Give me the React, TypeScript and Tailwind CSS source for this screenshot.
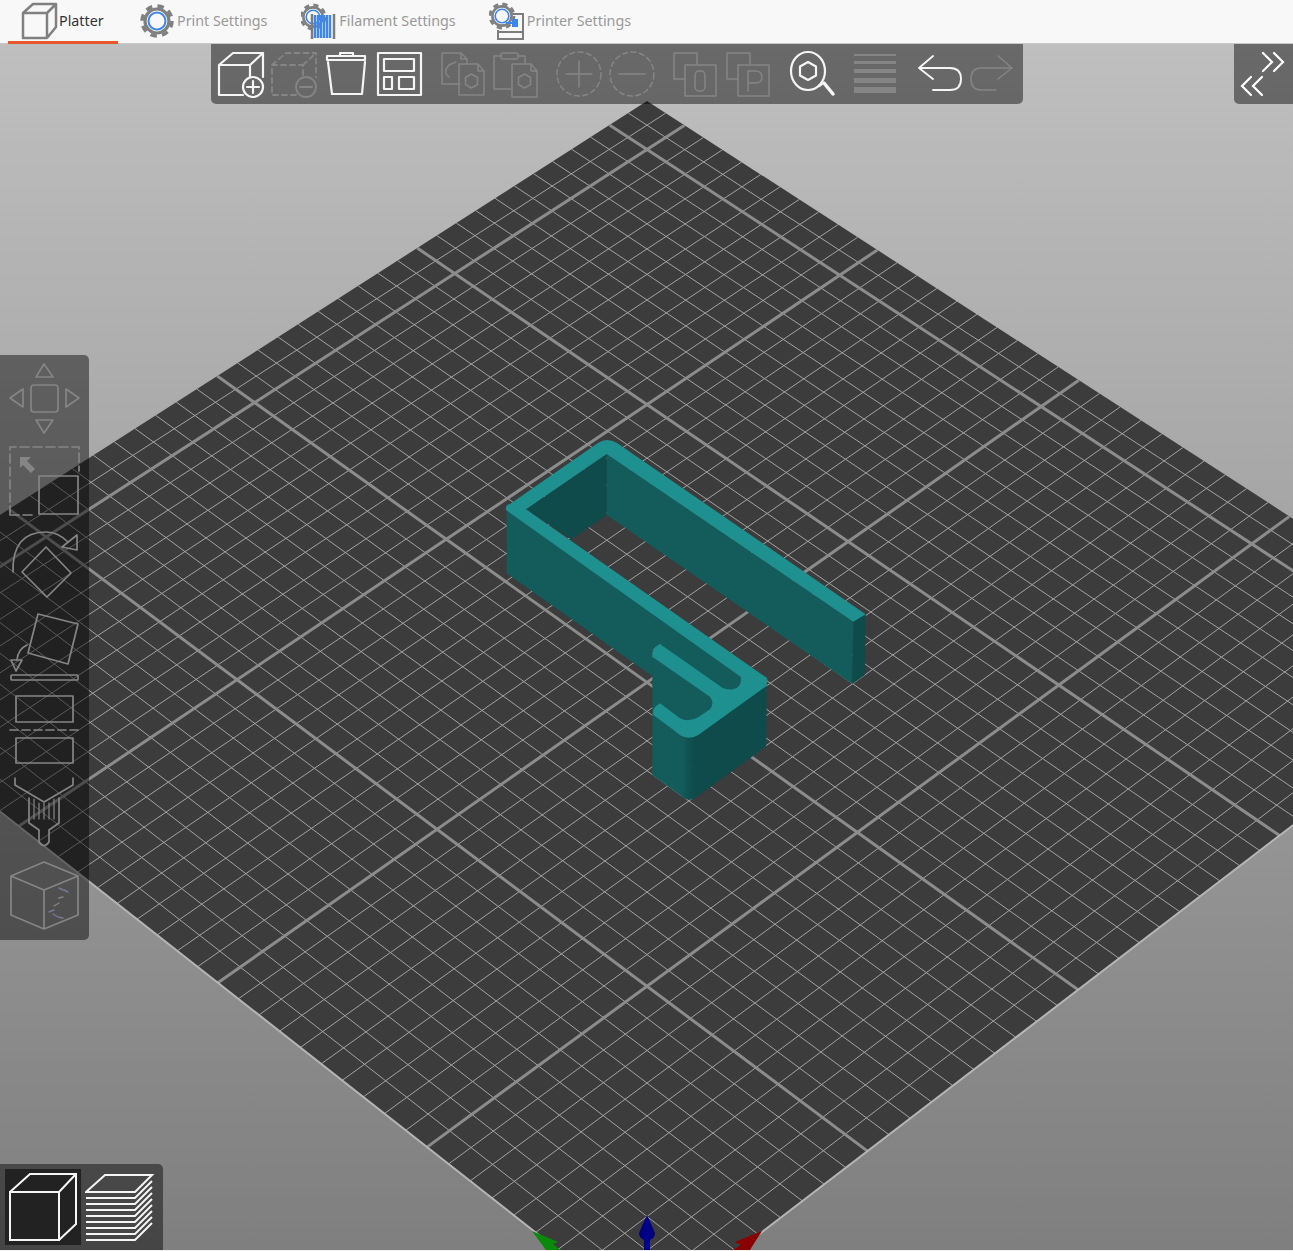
const quad = {
  top: [647, 101],
  right: [1510, 659],
  bottom: [647, 1320],
  left: [-208, 648],
};

// unit square to plate quad, u runs top->right, v runs top->left
function makeProject() {
  const [x0, y0] = quad.top;
  const [x1, y1] = quad.right;
  const [x2, y2] = quad.bottom;
  const [x3, y3] = quad.left;
  const dx1 = x1 - x2;
  const dx2 = x3 - x2;
  const sx = x0 - x1 + x2 - x3;
  const dy1 = y1 - y2;
  const dy2 = y3 - y2;
  const sy = y0 - y1 + y2 - y3;
  const den = dx1 * dy2 - dx2 * dy1;
  const g = (sx * dy2 - dx2 * sy) / den;
  const h = (dx1 * sy - sx * dy1) / den;
  const a = x1 - x0 + g * x1;
  const b = x3 - x0 + h * x3;
  const d = y1 - y0 + g * y1;
  const e = y3 - y0 + h * y3;
  return (u: number, v: number) => {
    const w = g * u + h * v + 1;
    return [(a * u + b * v + x0) / w, (d * u + e * v + y0) / w];
  };
}

const project = makeProject();
const CELLS = 42;

function GridLines() {
  const minor: string[] = [];
  const major: string[] = [];
  for (let i = 1; i < CELLS; i++) {
    const t = i / CELLS;
    const [ax, ay] = project(t, 0);
    const [bx, by] = project(t, 1);
    const [cx, cy] = project(0, t);
    const [dx, dy] = project(1, t);
    const list = (i - 2) % 10 === 0 ? major : minor;
    list.push(`M${ax} ${ay}L${bx} ${by}M${cx} ${cy}L${dx} ${dy}`);
  }
  return (
    <>
      <path d={minor.join("")} stroke="#a3a3a3" strokeWidth={1} fill="none" />
      <path d={major.join("")} stroke="#8c8c8c" strokeWidth={3} fill="none" />
    </>
  );
}

function Model() {
  const topC = "#1f9090";
  const mid = "#145c5c";
  const dark = "#0f4b4b";
  return (
    <g transform="translate(490 430) scale(0.3333)">
      <defs>
        <linearGradient id="corner" x1="0" x2="1" y1="0" y2="0">
          <stop offset="0" stopColor="#145c5c" />
          <stop offset="0.5" stopColor="#115252" />
          <stop offset="1" stopColor="#0f4b4b" />
        </linearGradient>
      </defs>
      <polygon points="350,72 1090,575 1087,762 350,255" fill={mid} />
      <polygon points="350,72 108,238 245,328 350,255" fill={dark} />
      <polygon points="1090,565 1127,553 1125,735 1087,762" fill={dark} />
      <path d="M50 240 L752 730 L765 770 L720 795 L700 785 L510 642 L487 660 L487 738 L50 430 Z" fill={mid} />
      <polygon points="487,680 665,795 680,825 630,870 570,875 510,825 487,845" fill={mid} />
      <polygon points="487,850 578,920 578,1100 487,1035" fill={mid} />
      <polygon points="610,920 830,765 828,950 615,1105" fill={dark} />
      <path d="M575 915 L612 918 L615 1105 Q595 1115 575 1100 Z" fill="url(#corner)" />
      <path
        d="M48 240 Q45 225 60 222 L325 38 Q350 22 380 38 L1127 553 L1090 575 L350 72 L108 238 L832 745 L830 768 L625 915 Q600 930 575 918 L490 855 Q482 838 510 820 L570 865 Q595 878 625 862 L660 838 Q675 820 660 800 L487 680 Q484 655 510 642 L695 772 Q705 780 730 778 Q758 770 752 740 Z"
        fill={topC}
      />
    </g>
  );
}

function Axes() {
  return (
    <g>
      <defs>
        <linearGradient id="blueArrow" x1="0" x2="1" y1="0" y2="0">
          <stop offset="0" stopColor="#00006a" />
          <stop offset="0.5" stopColor="#000090" />
          <stop offset="1" stopColor="#00006a" />
        </linearGradient>
      </defs>
      <path d="M532 1231 L558 1242 L553 1244 L560 1250 L546 1250 L543 1246 Z" fill="#0a8a0a" />
      <path d="M762 1231 L735 1242 L741 1245 L733 1250 L750 1250 L753 1245 Z" fill="#8a0000" />
      <path d="M647 1215 Q652 1226 655 1233 Q655 1238 650 1240 L650 1250 L644 1250 L644 1240 Q639 1238 639 1233 Q642 1226 647 1215 Z" fill="url(#blueArrow)" />
    </g>
  );
}

function Scene() {
  const pts = [quad.top, quad.right, quad.bottom, quad.left].map((p) => p.join(",")).join(" ");
  const e1 = project(1, 0);
  const e2 = project(1, 1);
  const e3 = project(0, 1);
  return (
    <svg className="absolute inset-0 w-[1293px] h-[1206px]" viewBox="0 44 1293 1206">
      <polygon points={pts} fill="#3c3c3c" />
      <GridLines />
      <path d={`M${e1[0]} ${e1[1]}L${e2[0]} ${e2[1]}L${e3[0]} ${e3[1]}`} stroke="#b5b5b5" strokeWidth={2} fill="none" />
      <Model />
      <Axes />
    </svg>
  );
}

function TabGear({ cx, cy, big }: { cx: number; cy: number; big?: boolean }) {
  const k = big ? 1 : 0.8;
  return (
    <g transform={`translate(${cx} ${cy}) scale(${k})`}>
      <circle r={15} fill="none" stroke="#808080" strokeWidth={3.5} strokeDasharray="6.5 5.28" />
      <circle r={12} fill="#f8f8f8" stroke="#808080" strokeWidth={3.2} />
      <circle r={8.5} fill="none" stroke="#3d86ee" strokeWidth={2} />
    </g>
  );
}

function PlatterIcon() {
  return (
    <svg width={38} height={38} viewBox="0 0 38 38" fill="none" stroke="#808080" strokeWidth={2.5} strokeLinejoin="round">
      <path d="M2 11 L12 2 H35 V25 L26 36 H2 Z M2 11 H26 V36 M26 11 L35 2" />
    </svg>
  );
}

function PrintIcon() {
  return (
    <svg width={35} height={36} viewBox="0 0 35 36">
      <TabGear cx={17} cy={18} big />
    </svg>
  );
}

function FilamentIcon() {
  return (
    <svg width={38} height={38} viewBox="0 0 38 38">
      <TabGear cx={12} cy={15} />
      <path d="M14 13v23M17 13v23M20 13v23M23 13v23M26 13v23M29 13v23" stroke="#3d86ee" strokeWidth={2.4} />
      <path d="M11 12v25M33 12v25" stroke="#7d7d7d" strokeWidth={2.5} />
    </svg>
  );
}

function PrinterIcon() {
  return (
    <svg width={38} height={38} viewBox="0 0 38 38" fill="none">
      <TabGear cx={13} cy={14} />
      <path d="M9 28 V37 H34 V12 H23" stroke="#7d7d7d" strokeWidth={2} />
      <path d="M9 30 H34" stroke="#7d7d7d" strokeWidth={2} />
      <rect x={23} y={17} width={6} height={8} fill="#3d86ee" />
      <path d="M17 21 H23" stroke="#3d86ee" strokeWidth={2} />
    </svg>
  );
}

const tabs = [
  { label: "Platter", icon: <PlatterIcon />, active: true, cls: "pl-[13px] w-[110px] ml-[8px]" },
  { label: "Print Settings", icon: <PrintIcon />, active: false, cls: "ml-[22px] gap-[2px]" },
  { label: "Filament Settings", icon: <FilamentIcon />, active: false, cls: "ml-[34px]" },
  { label: "Printer Settings", icon: <PrinterIcon />, active: false, cls: "ml-[33px]" },
];

function TabBar() {
  return (
    <div className="h-[44px] bg-[#f8f8f8] flex shrink-0 border-b border-[#c8c8c8]">
      {tabs.map((t) => (
        <div
          key={t.label}
          className={`h-[44px] flex items-center ${t.cls} ${t.active ? "border-b-[3px] border-[#e8582a]" : "pb-[3px]"}`}
        >
          {t.icon}
          <span className={`text-[14.3px] font-['Noto_Sans',sans-serif] whitespace-nowrap ${t.active ? "text-[#333333]" : "text-[#999999]"}`}>
            {t.label}
          </span>
        </div>
      ))}
    </div>
  );
}

const on = "#f5f5f5";
const off = "#858585";

function Ico({ children, color = on, w = 1.8 }: { children: React.ReactNode; color?: string; w?: number }) {
  return (
    <svg width={48} height={48} viewBox="0 0 48 48" fill="none" stroke={color} strokeWidth={w} strokeLinejoin="round" strokeLinecap="round" className="shrink-0">
      {children}
    </svg>
  );
}

function PageHex({ x, y, w = 25, h = 31 }: { x: number; y: number; w?: number; h?: number }) {
  const cx = x + w / 2;
  const cy = y + 17;
  return (
    <g>
      <path d={`M${x} ${y} H${x + w - 6} L${x + w} ${y + 7} V${y + h} H${x} Z M${x + w - 6} ${y} V${y + 7} H${x + w}`} />
      <path d={`M${cx} ${cy - 7} L${cx + 6} ${cy - 3.5} V${cy + 3.5} L${cx} ${cy + 7} L${cx - 6} ${cy + 3.5} V${cy - 3.5} Z`} />
    </g>
  );
}

function TopToolbar() {
  return (
    <div className="absolute left-[211px] top-0 w-[812px] h-[60px] bg-black/45 rounded-b-[5px] flex items-center pl-[6px]">
      <div className="flex gap-[4.6px]">
        <Ico w={2.2}>
          <path d="M26 45 H2 V15 L16 3 H46 V27 M2 15 H33 V27 M33 15 L46 3" />
          <circle cx={36} cy={37} r={10} />
          <path d="M36 31 V43 M30 37 H42" />
        </Ico>
        <Ico color={off}>
          <path d="M26 45 H2 V15 L16 3 H46 V27 M2 15 H33 V27 M33 15 L46 3" strokeDasharray="5 4" />
          <circle cx={36} cy={37} r={10} />
          <path d="M30 37 H42" />
        </Ico>
        <Ico w={2.2}>
          <path d="M6 12 L10 44 H40 L43 12" />
          <rect x={5} y={6} width={38} height={4} />
          <path d="M18 6 V3 H31 V6" />
        </Ico>
        <Ico w={2.2}>
          <rect x={3} y={3} width={43} height={42} />
          <rect x={9} y={9} width={30} height={12} />
          <rect x={9} y={27} width={8} height={12} />
          <rect x={24} y={27} width={15} height={12} />
        </Ico>
      </div>
      <div className="flex gap-[5px] ml-[15px]">
        <Ico color={off} w={1.5}>
          <path d="M22 34 H4 V3 H23 L29 9 V14 M23 3 V9 H29" />
          <path d="M18 12 L11 15 L8 19 V24 L11 27" />
          <PageHex x={21} y={14} />
        </Ico>
        <Ico color={off} w={1.5}>
          <path d="M20 39 H3 V6 H10 M27 6 H34 V13" />
          <rect x={10} y={3} width={17} height={6} rx={2} />
          <PageHex x={21} y={14} h={33} />
        </Ico>
      </div>
      <div className="flex gap-[5px] ml-[16px]">
        <Ico color={off} w={1.5}>
          <circle cx={24} cy={24} r={22} strokeDasharray="5 3.5" />
          <path d="M24 11 V37 M11 24 H37" />
        </Ico>
        <Ico color={off} w={1.5}>
          <circle cx={24} cy={24} r={22} strokeDasharray="5 3.5" />
          <path d="M11 24 H37" />
        </Ico>
      </div>
      <div className="flex gap-[5px] ml-[15px]">
        <Ico color={off} w={1.5}>
          <path d="M3 29 V3 H26 V14 M3 29 H14" />
          <rect x={14} y={15} width={31} height={31} />
          <rect x={24} y={21} width={10} height={20} rx={4} />
        </Ico>
        <Ico color={off} w={1.5}>
          <path d="M3 29 V3 H26 V14 M3 29 H14" />
          <rect x={14} y={15} width={31} height={31} />
          <path d="M24 41 V21 H31 Q38 21 38 27 Q38 33 31 33 H24" />
        </Ico>
      </div>
      <div className="ml-[16px]">
        <Ico w={2.2}>
          <ellipse cx={20} cy={21} rx={17} ry={19} />
          <path d="M20 12 L28 16.5 V25.5 L20 30 L12 25.5 V16.5 Z" />
          <path d="M31 36 L34 34" />
          <path d="M36 33 L45 44" strokeWidth={3.5} />
        </Ico>
      </div>
      <div className="ml-[15px]">
        <svg width={48} height={48} viewBox="0 0 48 48" fill="#858585" className="shrink-0">
          <rect x={3} y={4} width={42} height={2} />
          <rect x={3} y={11} width={42} height={3} />
          <rect x={3} y={19} width={42} height={4} />
          <rect x={3} y={28} width={42} height={5} />
          <rect x={3} y={37} width={42} height={6} />
        </svg>
      </div>
      <div className="flex gap-[5px] ml-[16px]">
        <Ico w={1.9}>
          <path d="M18 6 L4 18 L18 29 M4 18 H35 Q46 18 46 29 Q46 40 35 40 H18" />
        </Ico>
        <Ico color={off} w={1.5}>
          <path d="M30 6 L44 18 L30 29 M44 18 H13 Q3 18 3 29 Q3 40 13 40 H28" />
        </Ico>
      </div>
    </div>
  );
}

function CollapseButton() {
  return (
    <div className="absolute right-0 top-0 w-[59px] h-[60px] bg-black/45 rounded-bl-[5px] flex items-center justify-center">
      <svg width={59} height={60} viewBox="0 0 59 60" fill="none" stroke="#ffffff" strokeWidth={2.2} strokeLinecap="round">
        <path d="M29 9 L38 18 L29 27 M40 9 L49 18 L40 27" />
        <path d="M17 33 L8 42 L17 51 M28 33 L19 42 L28 51" />
      </svg>
    </div>
  );
}

function Side({ children }: { children: React.ReactNode }) {
  return (
    <svg width={72} height={72} viewBox="0 0 72 72" fill="none" stroke="#858585" strokeWidth={1.7} strokeLinejoin="round" strokeLinecap="round" className="shrink-0">
      {children}
    </svg>
  );
}

function LeftToolbar() {
  return (
    <div className="absolute left-0 top-[311px] w-[89px] h-[585px] bg-black/45 rounded-r-[5px] flex flex-col gap-[11px] pl-[8px] pt-[7px]">
      <Side>
        <rect x={23} y={23} width={27} height={27} rx={3} />
        <path d="M36 2 L28 15 H45 Z M28 58 H45 L36 71 Z M2 36 L15 27 V45 Z M58 27 L71 36 L58 45 Z" />
      </Side>
      <Side>
        <path d="M2 70 V2 H71 V26 M2 70 H24" strokeDasharray="9 4" />
        <rect x={31} y={31} width={39} height={38} />
        <path d="M12 12 H23 L19 16 L27 24 L23 28 L15 20 L12 23 Z" fill="#858585" stroke="none" />
      </Side>
      <Side>
        <path d="M5 44 Q4 4 38 4 Q50 4 60 14" />
        <path d="M69 7 L69 22 L54 19 Z" />
        <path d="M38 19 L63 45 L39 69 L14 44 Z" />
      </Side>
      <Side>
        <path d="M30 3 L70 13 L60 53 L20 42 Z" />
        <rect x={3} y={64} width={67} height={5} rx={1} />
        <path d="M19 34 Q10 38 9 49" />
        <path d="M3 49 L14 49 L8 60 Z" />
      </Side>
      <Side>
        <rect x={8} y={2} width={57} height={26} />
        <path d="M2 36 H70" strokeDasharray="8 4" />
        <rect x={8} y={44} width={57} height={25} />
      </Side>
      <Side>
        <path d="M7 1 V8 L36 25 L65 8 V1" />
        <path d="M21 21 V46 L31 53 V65 Q36 72 41 65 V53 L51 46 V21" />
        <path d="M26 22 V42 M31 26 V42 M36 26 V42 M41 26 V42 M46 22 V42" strokeWidth={1.2} />
      </Side>
      <Side>
        <path d="M36 2 L70 16 V55 L36 69 L3 55 V16 Z M3 16 L36 30 L70 16 M36 30 V69" />
        <path d="M51 28 L55 30 M56 30 L60 32 M41 52 L46 50 M45 54 L50 57 M50 57 L55 58" stroke="#77779a" strokeWidth={1.4} />
        <path d="M51 38 L55 37 M46 46 L51 43" strokeWidth={1.4} />
      </Side>
    </div>
  );
}

function ViewToggle() {
  return (
    <div className="absolute left-0 top-[1120px] w-[163px] h-[86px] bg-black/45 rounded-tr-[5px] flex items-center pl-[5px]">
      <div className="w-[76px] h-[76px] bg-[#222222] shrink-0">
        <svg width={76} height={76} viewBox="0 0 76 76" fill="none" stroke="#f5f5f5" strokeWidth={2}>
          <rect x={5} y={23} width={49} height={48} />
          <path d="M5 23 L25 5 H71 V55 L54 71 M54 23 L71 5" />
        </svg>
      </div>
      <svg width={72} height={72} viewBox="0 0 72 72" fill="none" stroke="#f5f5f5" strokeWidth={2} className="ml-[4px]">
        <path d="M1 21 L20 4 H67 L50 21 Z" />
        <path d="M1 27 H50 L67 10 M1 33 H50 L67 16 M1 39 H50 L67 22 M1 45 H50 L67 28 M1 51 H50 L67 34 M1 57 H50 L67 40 M1 63 H50 L67 46 M1 69 H50 L67 52" />
      </svg>
    </div>
  );
}

export default function App() {
  return (
    <div className="w-[1293px] h-[1251px] flex flex-col overflow-hidden bg-[#f0f0f0]">
      <TabBar />
      <div className="relative h-[1206px] shrink-0 overflow-hidden bg-linear-to-b from-[#bfbfbf] to-[#7f7f7f]">
        <Scene />
        <TopToolbar />
        <CollapseButton />
        <LeftToolbar />
        <ViewToggle />
      </div>
    </div>
  );
}
